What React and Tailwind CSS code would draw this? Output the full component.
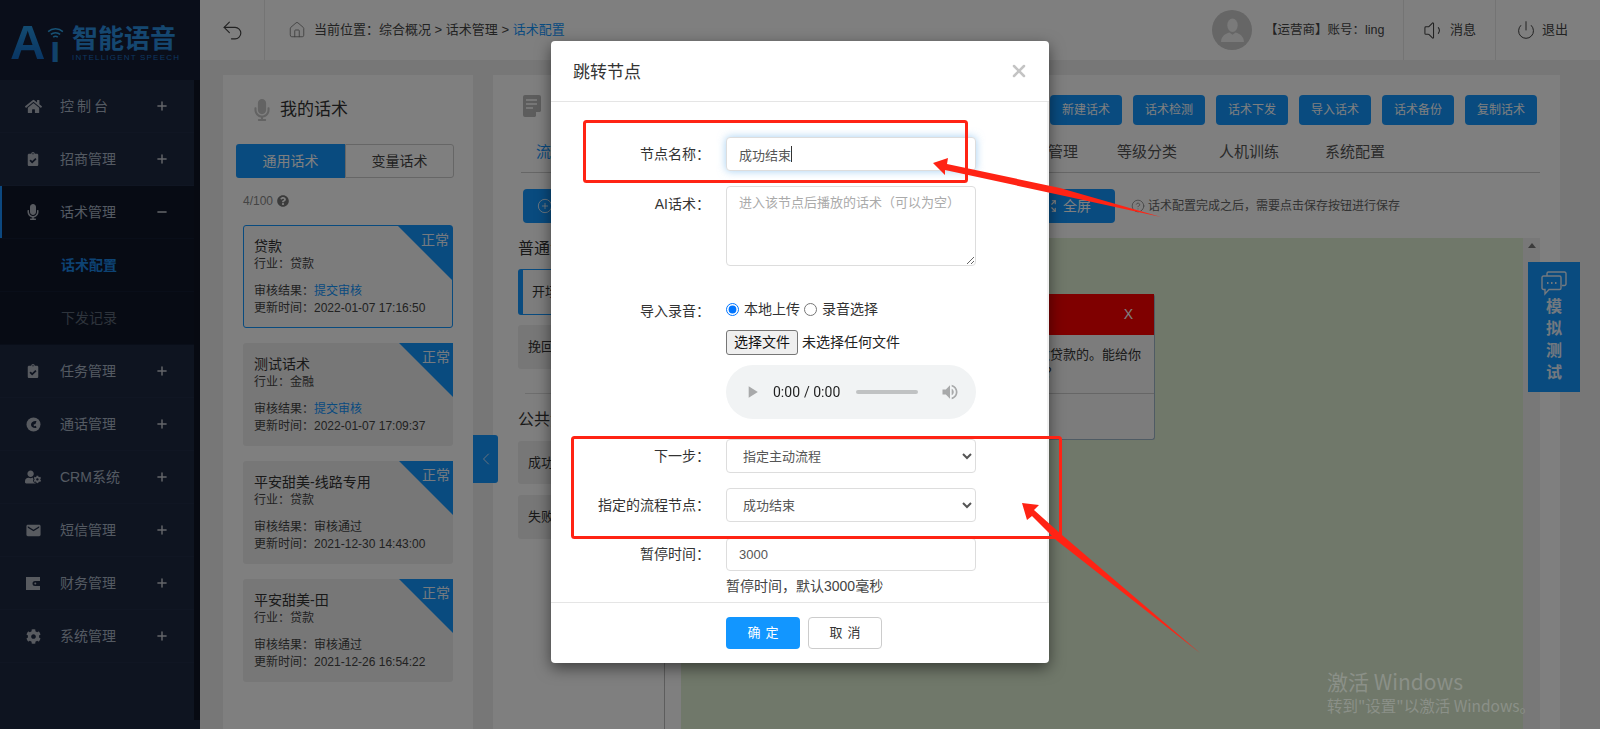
import React from "react";
import { FaHome, FaClipboardCheck, FaMicrophone, FaUserCog, FaCog, FaQuestionCircle } from "react-icons/fa";
import { MdEmail } from "react-icons/md";
import { Plus, Minus, Undo2, House, Volume1, Power, ChevronLeft, X, CircleHelp, CirclePlus, Expand } from "lucide-react";

const font = { fontFamily: '"Liberation Sans","Noto Sans CJK SC",sans-serif' };

function PhoneIcon() {
  return (
    <svg width="15" height="15" viewBox="0 0 15 15">
      <circle cx="7.5" cy="7.5" r="7" fill="currentColor" />
      <path d="M10.5 4.2C8 3.6 5.2 5 5 7.5c-.2 2.5 3 4 5.500 3.200l-.6-2-1.600.5c-.6-.4-.8-1-.6-1.600l1.700-.5z" fill="#1c2840" />
    </svg>
  );
}
function WalletIcon() {
  return (
    <svg width="14" height="13" viewBox="0 0 14 13">
      <path d="M0 0h14v4H9a2.500 2.500 0 0 0 0 5h5v4H0z" fill="currentColor" />
      <circle cx="9.300" cy="6.500" r="1" fill="currentColor" />
    </svg>
  );
}
function DocIcon() {
  return (
    <svg width="18" height="22" viewBox="0 0 18 22" className="text-[#bbb]">
      <path d="M2 0h14a2 2 0 0 1 2 2v14l-6 6H2a2 2 0 0 1-2-2V2a2 2 0 0 1 2-2z" fill="currentColor" />
      <path d="M3 5h11M3 9h11M3 13h7" stroke="#fff" strokeWidth="1.500" />
      <path d="M18 17l-5 5v-5z" fill="#fff" />
    </svg>
  );
}

const menu = [
  { t: "控制台", I: FaHome, s: 17, wide: true },
  { t: "招商管理", I: FaClipboardCheck, s: 14 },
  { t: "话术管理", I: FaMicrophone, s: 16, active: true },
  { t: "话术配置", sub: "on" },
  { t: "下发记录", sub: "off" },
  { t: "任务管理", I: FaClipboardCheck, s: 14 },
  { t: "通话管理", I: PhoneIcon },
  { t: "CRM系统", I: FaUserCog, s: 16 },
  { t: "短信管理", I: MdEmail, s: 17 },
  { t: "财务管理", I: WalletIcon },
  { t: "系统管理", I: FaCog, s: 15 },
];

function Sidebar() {
  return (
    <aside className="w-[200px] h-full shrink-0 flex flex-col bg-[#1c2840]">
      <div className="h-[80px] shrink-0 bg-[#141c34] relative">
        <span className="absolute left-[10px] top-[15px] text-[49px] leading-[54px] font-bold bg-gradient-to-b from-[#2fa4ea] to-[#0f5fc0] bg-clip-text text-transparent">A</span>
        <span className="absolute left-[50px] top-[30px] text-[37px] leading-[40px] font-bold text-[#2385d4]">ı</span>
        <svg className="absolute left-[47px] top-[27px]" width="17" height="12" viewBox="0 0 18 13" fill="none" stroke="#2fa4ea" strokeWidth="1.600">
          <path d="M1 5c4.500-4 11.500-4 16 0M4 8c2.800-2.500 7.200-2.500 10 0M6.500 11c1.500-1.300 3.500-1.300 5 0" />
        </svg>
        <div className="absolute left-[72px] top-[24px] text-[26px] leading-[30px] font-bold text-[#2a8ee0] whitespace-nowrap">智能语音</div>
        <div className="absolute left-[72px] top-[53px] text-[8px] leading-[9px] tracking-[1.2px] text-[#1d6fc0] whitespace-nowrap">INTELLIGENT SPEECH</div>
      </div>
      <div className="flex flex-1 min-h-0">
        <nav className="w-[194px]">
          {menu.map((m) => (
            <div
              key={m.t}
              className={
                "h-[53px] flex items-center border-b text-[14px] relative " +
                (m.active || m.sub ? "bg-[#0e1628] border-[#131c32] " : "border-[#212c46] ")
              }
            >
              {m.active && <span className="absolute left-0 top-0 bottom-0 w-[2px] bg-[#1890ff]" />}
              {m.sub ? (
                <span className={"pl-[61px] " + (m.sub === "on" ? "font-bold text-[#1b86e6]" : "text-[#5d6878]")}>{m.t}</span>
              ) : (
                <>
                  <span className="w-[60px] pl-[6px] flex justify-center text-[#b0b6c0]">
                    <m.I size={m.s} />
                  </span>
                  <span className={"w-[95px] text-[#a8b4c4] " + (m.wide ? "tracking-[3px]" : "")}>{m.t}</span>
                  {m.active ? <Minus size={14} strokeWidth={2.500} className="text-[#c8ccd4]" /> : <Plus size={14} strokeWidth={2.500} className="text-[#c8ccd4]" />}
                </>
              )}
            </div>
          ))}
        </nav>
        <div className="w-[6px] mb-[9px] bg-[#0f1525]" />
      </div>
    </aside>
  );
}

function Header() {
  return (
    <header className="h-[60px] shrink-0 bg-white flex items-center text-[13px] text-[#555]">
      <div className="w-[65px] h-full border-r border-[#e8e8e8] flex items-center justify-center">
        <Undo2 size={25} strokeWidth={1.100} className="text-[#444]" />
      </div>
      <House size={18} strokeWidth={1.100} className="ml-[23px] text-[#777]" />
      <span className="ml-[8px] text-[#444]">当前位置：综合概况 &gt; 话术管理 &gt; <span className="text-[#1296ff]">话术配置</span></span>
      <div className="ml-auto w-[40px] h-[40px] rounded-full bg-[#ccc] flex items-center justify-center overflow-hidden">
        <svg width="25" height="27" viewBox="0 0 24 26" fill="#f4f4f4">
          <ellipse cx="12" cy="8" rx="5" ry="6.500" />
          <path d="M1 24c0-5 4-8 8-9l3 2 3-2c4 1 8 4 8 9z" />
        </svg>
      </div>
      <span className="ml-[13px] mr-[21px] text-[12.500px] text-[#444] w-[117px] whitespace-nowrap">【运营商】账号：ling</span>
      <div className="w-[92px] h-full border-l border-[#e8e8e8] flex items-center pl-[19px] gap-[4px] text-[13px] text-[#444]">
        <Volume1 size={23} strokeWidth={1.100} />消息
      </div>
      <div className="w-[105px] h-full border-l border-[#e8e8e8] flex items-center pl-[20px] gap-[6px] text-[13px] text-[#444]">
        <Power size={20} strokeWidth={1.200} />退出
      </div>
    </header>
  );
}

const cards = [
  { t: "贷款", i: "贷款", r: "提交审核", link: true, d: "2022-01-07 17:16:50", sel: true },
  { t: "测试话术", i: "金融", r: "提交审核", link: true, d: "2022-01-07 17:09:37" },
  { t: "平安甜美-线路专用", i: "贷款", r: "审核通过", d: "2021-12-30 14:43:00" },
  { t: "平安甜美-田", i: "贷款", r: "审核通过", d: "2021-12-26 16:54:22" },
];

function Card({ c }) {
  return (
    <div className={"relative h-[103px] rounded-[3px] text-[#444] " + (c.sel ? "bg-[#f8f8f8] border border-[#1296ff] pl-[10px] pt-[10px]" : "bg-[#efefef] pl-[11px] pt-[11px]")}>
      <div className="absolute right-0 top-0 w-[54px] h-[54px] bg-[#1296ff] [clip-path:polygon(0_0,100%_0,100%_100%)]" />
      <span className="absolute right-[3px] top-[5px] text-[14px] leading-[18px] text-[#eaf4ff]">正常</span>
      <div className="text-[14px] leading-[20px] text-[#333] whitespace-nowrap">{c.t}</div>
      <div className="text-[12px] leading-[17px]">行业：{c.i}</div>
      <div className="text-[12px] leading-[17px] mt-[10px]">审核结果：<span className={c.link ? "text-[#1296ff]" : ""}>{c.r}</span></div>
      <div className="text-[12px] leading-[17px]">更新时间：{c.d}</div>
    </div>
  );
}

function LeftPanel() {
  return (
    <section className="w-[250px] shrink-0 bg-white px-[13px] relative">
      <div className="h-[69px] flex items-center pl-[15px]">
        <FaMicrophone size={22} className="text-[#c6c6c6]" />
        <span className="ml-[7px] text-[17px] text-[#333]">我的话术</span>
      </div>
      <div className="flex w-[218px] h-[34px] text-[14px]">
        <div className="w-[109px] bg-[#1296ff] rounded-l-[3px] text-white flex items-center justify-center">通用话术</div>
        <div className="w-[109px] border border-[#ccc] rounded-r-[3px] text-[#444] flex items-center justify-center">变量话术</div>
      </div>
      <div className="flex items-center gap-[4px] ml-[7px] mt-[14px] h-[17px] text-[12px] text-[#888]">
        4/100 <FaQuestionCircle size={12} className="text-[#777]" />
      </div>
      <div className="ml-[7px] w-[210px] mt-[16px] flex flex-col gap-[15px]">
        {cards.map((c) => <Card key={c.t} c={c} />)}
      </div>
      <div className="absolute left-[250px] top-[360px] w-[25px] h-[48px] rounded-r-[3px] bg-[#1296ff] flex items-center justify-center z-10">
        <ChevronLeft size={20} strokeWidth={1.200} className="text-[#cde4fb]" />
      </div>
    </section>
  );
}

function Node() {
  return (
    <div className="absolute left-[174px] top-[56px] w-[300px] h-[146px] bg-[#f8f8f8] rounded-[3px] border-r border-b border-[#9fb6c8]">
      <div className="h-[41px] bg-[#fe0000] flex items-center justify-end pr-[21px] text-[14px] text-white">X</div>
      <div className="h-[59px] border-b border-[#ccc] text-[13px] leading-[18px] text-[#333] pt-[11px] pr-[13px] text-right whitespace-nowrap">
        <div>您好，这边是做贷款的。能给你</div>
        <div className="pr-[83px]">介绍一下吗？</div>
      </div>
    </div>
  );
}

function RightPanel() {
  const btns = ["新建话术", "话术检测", "话术下发", "导入话术", "话术备份", "复制话术"];
  return (
    <section className="w-[1067px] shrink-0 bg-white pl-[25px] flex flex-col">
      <div className="h-[50px] pt-[20px] flex items-start shrink-0">
        <span className="ml-[5px]"><DocIcon /></span>
        <span className="ml-[14px] mt-[1px] text-[16px] text-[#333]">话术列表</span>
        <div className="ml-auto mr-[23px] flex gap-[11px]">
          {btns.map((b) => (
            <div key={b} className="w-[72px] h-[30px] rounded-[4px] bg-[#1296ff] text-white text-[12px] flex items-center justify-center">{b}</div>
          ))}
        </div>
      </div>
      <div className="h-[48px] ml-[3px] mr-[20px] pt-[8px] border-b border-[#ccc] flex items-center text-[15px] text-[#555] shrink-0">
        <span className="ml-[15px] text-[#1296ff]">流程配置</span>
        <div className="ml-auto mr-[155px] flex">
          <span className="mr-[39px]">知识库管理</span>
          <span className="mr-[42px]">等级分类</span>
          <span className="mr-[46px]">人机训练</span>
          <span>系统配置</span>
        </div>
      </div>
      <div className="h-[65px] ml-[5px] pt-[16px] flex items-start shrink-0">
        <div className="w-[100px] h-[34px] rounded-[4px] bg-[#1296ff] text-white flex items-center gap-[6px] pl-[14px] text-[14px]">
          <CirclePlus size={16} strokeWidth={1.200} />新建
        </div>
        <div className="ml-auto mr-[160px] flex items-center">
          <div className="w-[100px] h-[34px] rounded-[4px] bg-[#1296ff] text-white flex items-center gap-[6px] pl-[28px] text-[14px]">
            <Expand size={14} />全屏
          </div>
          <CircleHelp size={14} strokeWidth={1.200} className="ml-[16px] text-[#777]" />
          <span className="ml-[3px] text-[12px] text-[#666]">话术配置完成之后，需要点击保存按钮进行保存</span>
        </div>
      </div>
      <div className="flex flex-1 min-h-0">
        <div className="w-[147px] shrink-0 border-r border-[#bbb] pr-[16px] text-[#333]">
          <div className="text-[16px] leading-[20px] mt-[1px]">普通流程</div>
          <div className="mt-[10px] h-[46px] rounded-[3px] bg-[#fafafa] border border-[#1296ff] border-l-[5px] flex items-center pl-[9px] text-[13px]">开场白</div>
          <div className="mt-[10px] h-[44px] rounded-[3px] bg-[#efefef] flex items-center pl-[10px] text-[13px]">挽回</div>
          <div className="mt-[24px] ml-[7px] border-t border-[#ddd]" />
          <div className="text-[16px] leading-[20px] mt-[16px]">公共流程</div>
          <div className="mt-[11px] h-[43px] rounded-[3px] bg-[#efefef] flex items-center pl-[10px] text-[13px]">成功结束</div>
          <div className="mt-[11px] h-[44px] rounded-[3px] bg-[#efefef] flex items-center pl-[10px] text-[13px]">失败结束</div>
        </div>
        <div className="ml-[16px] w-[842px] bg-[#e1f0d5] relative shrink-0">
          <Node />
        </div>
        <div className="w-[17px] bg-[#f1f1f1] flex justify-center pt-[5px] shrink-0">
          <span className="w-0 h-0 border-l-[4px] border-r-[4px] border-b-[5px] border-l-transparent border-r-transparent border-b-[#777]" />
        </div>
      </div>
    </section>
  );
}

function Row({ label, className = "", children, top = false }) {
  return (
    <div className={"flex " + (top ? "items-start " : "items-center ") + className}>
      <label className={"w-[159px] text-right text-[14px] text-[#333] whitespace-nowrap " + (top ? "pt-[8px]" : "")}>{label}：</label>
      <div className="ml-[16px] w-[250px]">{children}</div>
    </div>
  );
}

const inputCls = "block w-[250px] rounded-[4px] border border-[#ddd] bg-white px-[12px] text-[13px] text-[#555] outline-none";

function Modal() {
  return (
    <div className="absolute left-[551px] top-[41px] w-[498px] h-[622px] bg-white rounded-[4px] shadow-[0_5px_15px_rgba(0,0,0,0.5)] flex flex-col z-30 overflow-hidden" style={font}>
      <div className="h-[61px] shrink-0 pt-[4px] border-b border-[#e5e5e5] flex items-center pl-[22px] pr-[20px] justify-between">
        <h4 className="text-[17px] text-[#333]">跳转节点</h4>
        <X size={20} strokeWidth={3} className="text-[#c4c4c4] -mt-[4px]" />
      </div>
      <div className="h-[500px] shrink-0 pt-[35px] border-r-2 border-[#f0f0f0] overflow-hidden">
        <Row label="节点名称">
          <div className="relative">
            <input readOnly value="成功结束" className={inputCls + " h-[34px] border-[#66afe9] shadow-[0_0_8px_rgba(102,175,233,0.6)]"} />
            <span className="absolute left-[65px] top-[9px] w-[1px] h-[16px] bg-[#333]" />
          </div>
        </Row>
        <Row label="AI话术" top className="mt-[15px]">
          <textarea readOnly placeholder="进入该节点后播放的话术（可以为空）" className={inputCls + " h-[80px] py-[6px] placeholder:text-[#aaa]"} />
        </Row>
        <Row label="导入录音" top className="mt-[27px]">
          <div className="flex items-center h-[32px] text-[14px] text-[#333]">
            <input type="radio" name="src" defaultChecked className="m-0 w-[13px] h-[13px] accent-[#0075ff]" />
            <span className="ml-[5px]">本地上传</span>
            <input type="radio" name="src" className="m-0 ml-[4px] w-[13px] h-[13px]" />
            <span className="ml-[5px]">录音选择</span>
          </div>
          <div className="flex items-center mt-[5px] text-[14px] text-[#222]">
            <button className="w-[72px] h-[25px] bg-[#efefef] border border-[#767676] rounded-[3px] text-[14px] text-[#111]">选择文件</button>
            <span className="ml-[4px]">未选择任何文件</span>
          </div>
          <audio controls controlsList="nodownload noplaybackrate noremoteplayback" disableRemotePlayback className="block mt-[10px] w-[250px] h-[54px]" />
        </Row>
        <Row label="下一步" className="mt-[20px]">
          <select className={inputCls + " h-[34px]"} defaultValue="a"><option value="a">指定主动流程</option></select>
        </Row>
        <Row label="指定的流程节点" className="mt-[15px]">
          <select className={inputCls + " h-[34px]"} defaultValue="a"><option value="a">成功结束</option></select>
        </Row>
        <Row label="暂停时间" className="mt-[16px]">
          <input readOnly value="3000" className={inputCls + " h-[33px]"} />
        </Row>
        <div className="ml-[175px] mt-[6px] text-[14px] leading-[18px] text-[#444]">暂停时间，默认3000毫秒</div>
      </div>
      <div className="flex-1 border-t border-[#e5e5e5] pl-[175px] pt-[14px] flex items-start gap-[8px] text-[13px]">
        <button className="w-[74px] h-[32px] rounded-[4px] bg-[#1296ff] text-white tracking-[5px] pl-[5px]">确定</button>
        <button className="w-[74px] h-[32px] rounded-[4px] bg-white border border-[#ccc] text-[#333] tracking-[5px] pl-[5px]">取消</button>
      </div>
    </div>
  );
}

function Annotations() {
  return (
    <svg className="absolute left-0 top-0 z-40 pointer-events-none" width="1600" height="729" viewBox="0 0 1600 729">
      <rect x="584.500" y="121.500" width="382" height="60" rx="2" fill="none" stroke="#ff2314" strokeWidth="3" />
      <rect x="572.500" y="437.500" width="488" height="100" rx="2" fill="none" stroke="#ff2314" strokeWidth="3" />
      <polygon points="933,163 948,158 947,164 1060,188 1161,217 1060,195 945,170 945,175" fill="#ff2314" />
      <polygon points="1022,503 1039,505 1034,510 1062,535 1200,653 1056,540 1032,516 1027,520" fill="#ff2314" />
    </svg>
  );
}

export default function App() {
  return (
    <div className="relative w-[1600px] h-[729px] overflow-hidden bg-[#eeeeee] flex" style={font}>
      <Sidebar />
      <div className="flex-1 min-w-0 flex flex-col">
        <Header />
        <main className="flex-1 min-h-0 flex pt-[15px] pl-[23px] gap-[20px]">
          <LeftPanel />
          <RightPanel />
        </main>
      </div>
      <div className="absolute left-[1528px] top-[262px] w-[52px] h-[130px] bg-[#1296ff] text-[#e6f2ff] flex flex-col items-center pt-[9px] z-10">
        <svg width="26" height="25" viewBox="0 0 26 25" fill="none" stroke="currentColor" strokeWidth="1.400">
          <path d="M6 5V2.500A1.500 1.500 0 0 1 7.500 1h16A1.500 1.500 0 0 1 25 2.500V13a1.500 1.500 0 0 1-1.500 1.500H21" />
          <path d="M2.500 5h16A1.500 1.500 0 0 1 20 6.500V17a1.500 1.500 0 0 1-1.500 1.500H8L4 23v-4.500H2.500A1.500 1.500 0 0 1 1 17V6.500A1.500 1.500 0 0 1 2.500 5z" />
          <path d="M6 12h1.500M10 12h1.500M14 12h1.500" strokeWidth="1.800" />
        </svg>
        <div className="text-[16px] leading-[22px] font-bold w-[16px] text-center">模拟测试</div>
      </div>
      <div className="absolute inset-0 bg-[rgba(0,0,0,0.5)] z-20" />
      <Modal />
      <Annotations />
      <div className="absolute left-[1327px] top-[667px] z-50 text-[#8b9088] whitespace-nowrap" style={{ fontFamily: '"Noto Sans CJK SC","Open Sans",sans-serif' }}>
        <div className="text-[21px] leading-[28px]">激活 Windows</div>
        <div className="text-[15.500px] leading-[20px]">转到"设置"以激活 Windows。</div>
      </div>
    </div>
  );
}
